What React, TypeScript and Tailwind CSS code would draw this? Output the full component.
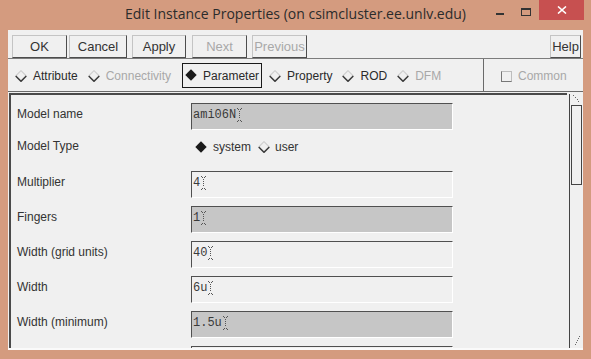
import type { ReactNode } from 'react';

// ─── small drawings ───────────────────────────────────────────────────────────

function Diamond({ on = false }: { on?: boolean }) {
  if (on) {
    return (
      <svg width="12" height="12" viewBox="0 0 12 12" className="shrink-0">
        <polygon points="6,0.3 11.7,6 6,11.7 0.3,6" fill="#1a1a1a" />
      </svg>
    );
  }
  return (
    <svg width="12" height="12" viewBox="0 0 12 12" className="shrink-0">
      <polyline points="0.7,6 6,0.7 11.3,6" fill="none" stroke="#cfcfcf" strokeWidth="1.2" />
      <polyline points="0.7,6 6,11.3 11.3,6" fill="none" stroke="#3a3a3a" strokeWidth="1.5" />
    </svg>
  );
}

function Caret() {
  return (
    <svg width="5" height="14" viewBox="0 0 5 14" className="shrink-0 ml-[1px]">
      <g fill="#555">
        <rect x="0" y="0" width="1" height="1" />
        <rect x="4" y="0" width="1" height="1" />
        <rect x="1" y="1" width="1" height="1" />
        <rect x="3" y="1" width="1" height="1" />
        <rect x="2" y="3" width="1" height="1" />
        <rect x="2" y="5" width="1" height="1" />
        <rect x="2" y="7" width="1" height="1" />
        <rect x="2" y="9" width="1" height="1" />
        <rect x="1" y="12" width="1" height="1" />
        <rect x="3" y="12" width="1" height="1" />
        <rect x="0" y="13" width="1" height="1" />
        <rect x="4" y="13" width="1" height="1" />
      </g>
    </svg>
  );
}

// ─── pieces ───────────────────────────────────────────────────────────────────

function ToolButton({ children, w, dim = false, className = '' }: { children: ReactNode; w: string; dim?: boolean; className?: string }) {
  return (
    <div
      className={`${w} ${className} h-[23px] flex items-center justify-center border border-t-[#c4c4c4] border-l-[#c4c4c4] border-r-[#4d4d4d] border-b-[#4d4d4d] text-[13px] leading-none ${dim ? 'text-[#a8a8a8]' : 'text-[#333]'}`}
    >
      {children}
    </div>
  );
}

function Tab({ label, dim = false }: { label: string; dim?: boolean }) {
  return (
    <div className="flex items-center gap-[6px] mt-[2px]">
      <Diamond />
      <span className={dim ? 'text-[#a8a8a8]' : 'text-[#2a2a2a]'}>{label}</span>
    </div>
  );
}

function Field({ value, gray = false }: { value?: string; gray?: boolean }) {
  return (
    <div
      className={`w-[262px] h-[27px] flex items-start pl-[1px] pt-[4px] border border-t-[#505050] border-l-[#505050] border-r-white border-b-white font-['Liberation_Mono',monospace] text-[12px] leading-[14px] text-[#3a3a3a] ${gray ? 'bg-[#c6c6c6]' : 'bg-[#f0f0f0]'}`}
    >
      {value !== undefined && (
        <>
          <span>{value}</span>
          <Caret />
        </>
      )}
    </div>
  );
}

function Row({ label, value, gray = false }: { label: string; value?: string; gray?: boolean }) {
  return (
    <div className="flex items-start h-[27px] shrink-0">
      <div className="w-[174px] pt-[3px] leading-[16px]">{label}</div>
      <Field value={value} gray={gray} />
    </div>
  );
}

// ─── page ─────────────────────────────────────────────────────────────────────

export default function App() {
  return (
    <div className="w-[591px] h-[359px] bg-[#d49b7f] flex flex-col overflow-hidden font-['Liberation_Sans',Arial,sans-serif] text-[12px] text-[#333]">

      {/* Title bar */}
      <div className="h-[30px] shrink-0 grid grid-cols-[1fr_auto_1fr]">
        <div />
        <div className="pt-[3px] font-['Open_Sans',sans-serif] text-[14px] leading-[22px] text-[#2b2b2b] whitespace-nowrap">
          Edit Instance Properties (on csimcluster.ee.unlv.edu)
        </div>
        <div className="flex justify-end items-start pr-[7px]">
          <div className="w-[26px] h-[20px] flex justify-center pt-[13px]">
            <div className="w-[8px] h-[2px] bg-[#333]" />
          </div>
          <div className="w-[26px] h-[20px] flex justify-center pt-[8px]">
            <div className="w-[10px] h-[8px] border border-t-2 border-[#333]" />
          </div>
          <div className="w-[45px] h-[20px] bg-[#c75050] flex items-center justify-center">
            <svg width="10" height="8" viewBox="0 0 10 8">
              <path d="M1 0.5 L9 7.5 M9 0.5 L1 7.5" stroke="#fff" strokeWidth="1.6" />
            </svg>
          </div>
        </div>
      </div>

      {/* Client area */}
      <div className="mx-[8px] h-[320px] shrink-0 bg-[#f0f0f0] flex flex-col border-b-2 border-[#fafafa] relative">

        {/* Toolbar */}
        <div className="h-[29px] shrink-0 flex items-end border-b border-[#7c7c7c]">
          <ToolButton w="w-[55px]" className="ml-[4px]">OK</ToolButton>
          <ToolButton w="w-[58px]" className="ml-[2px]">Cancel</ToolButton>
          <ToolButton w="w-[54px]" className="ml-[5px]">Apply</ToolButton>
          <ToolButton w="w-[55px]" className="ml-[6px]" dim>Next</ToolButton>
          <ToolButton w="w-[55px]" className="ml-[5px]" dim>Previous</ToolButton>
          <ToolButton w="w-[31px]" className="ml-auto mr-[2px]">Help</ToolButton>
        </div>

        {/* Tabs */}
        <div className="h-[33px] shrink-0 flex border-b border-[#6a6a6a]">
          <div className="w-[475px] flex items-center gap-[10px] pl-[7px]">
            <Tab label="Attribute" />
            <Tab label="Connectivity" dim />
            <div className="h-[25px] ml-[1px] -mr-[3px] flex items-center gap-[6px] pl-[2px] pr-[2px] border-[1.5px] border-[#1a1a1a]">
              <Diamond on />
              <span className="text-[#2a2a2a] mt-[1px]">Parameter</span>
            </div>
            <Tab label="Property" />
            <Tab label="ROD" />
            <Tab label="DFM" dim />
          </div>
          <div className="flex-1 flex items-center gap-[6px] pl-[17px] border-l border-[#6a6a6a]">
            <div className="w-[11px] h-[11px] mt-[2px] border border-t-[#bdbdbd] border-r-[#bdbdbd] border-l-[#777] border-b-[#777]" />
            <span className="text-[#a8a8a8] mt-[2px]">Common</span>
          </div>
        </div>

        {/* Scroll pane */}
        <div className="flex-1 min-h-0 ml-[1px] mt-[1px] flex">
          <div className="flex-1 border-l-2 border-t-2 border-[#4a4a4a] overflow-hidden pl-[6px] pt-[8px] flex flex-col gap-[8px]">
            <Row label="Model name" value="ami06N" gray />
            <div className="flex items-start h-[25px] shrink-0">
              <div className="w-[178px] leading-[16px]">Model Type</div>
              <div className="h-[18px] flex items-center">
                <Diamond on />
                <span className="ml-[6px]">system</span>
                <span className="ml-[7px]"><Diamond /></span>
                <span className="ml-[5px]">user</span>
              </div>
            </div>
            <Row label="Multiplier" value="4" />
            <Row label="Fingers" value="1" gray />
            <Row label="Width (grid units)" value="40" />
            <Row label="Width" value="6u" />
            <Row label="Width (minimum)" value="1.5u" gray />
            <div className="h-[27px] shrink-0 pl-[174px]">
              <Field />
            </div>
          </div>

          {/* Scrollbar */}
          <div className="w-[16px] pl-[2px] pt-[1px] flex">
            <div className="w-[13px] h-full border-l border-[#444] flex flex-col">
              <div className="h-[11px] flex justify-end pr-[2px]">
                <svg width="8" height="10" viewBox="0 0 8 10">
                  <g fill="#666">
                    <rect x="1" y="1" width="1" height="1" />
                    <rect x="3" y="3" width="1" height="1" />
                    <rect x="5" y="5" width="1" height="1" />
                    <rect x="6" y="7" width="1" height="1" />
                  </g>
                </svg>
              </div>
              <div className="ml-[1px] w-[11px] h-[80px] border border-[#444]" />
            </div>
          </div>
        </div>

        {/* Resize grip */}
        <svg width="8" height="10" viewBox="0 0 8 10" className="absolute right-[2px] bottom-[2px]">
          <g fill="#666">
            <rect x="6" y="0" width="1" height="1" />
            <rect x="5" y="2" width="1" height="1" />
            <rect x="4" y="4" width="1" height="1" />
            <rect x="3" y="6" width="1" height="1" />
            <rect x="2" y="8" width="1" height="1" />
          </g>
        </svg>
      </div>
    </div>
  );
}
